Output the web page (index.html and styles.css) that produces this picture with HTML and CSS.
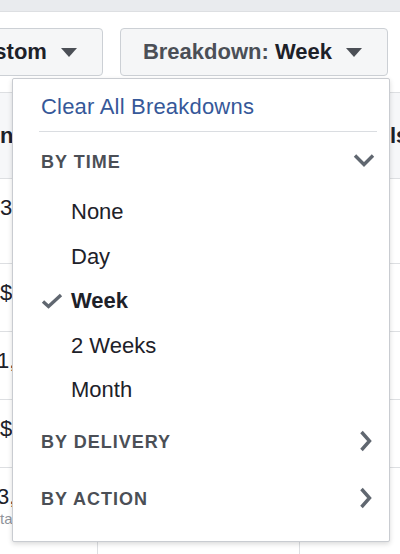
FILE: index.html
```html
<!DOCTYPE html>
<html lang="en">

<head>
    <meta charset="UTF-8">
    <meta name="viewport" content="width=device-width, initial-scale=1.0">
    <title>Breakdown</title>
    <link rel="stylesheet" href="styles.css">
</head>

<body>

    <div class="topbar"></div>

    <div class="toolbar">
        <button type="button" class="select">
            <span class="select-text">Custom</span>
            <svg class="caret" width="16" height="9" viewBox="0 0 16 9"><polygon points="0,0 16,0 8,9" /></svg>
        </button>
        <button type="button" class="select">
            <span class="select-text"><span class="select-label">Breakdown:</span> Week</span>
            <svg class="caret" width="16" height="9" viewBox="0 0 16 9"><polygon points="0,0 16,0 8,9" /></svg>
        </button>
    </div>

    <div class="table">
        <div class="row row-head">
            <div class="cell">nt</div>
            <div class="cell"></div>
            <div class="cell"></div>
            <div class="cell">ls</div>
        </div>
        <div class="row row-first">
            <div class="cell">3</div>
            <div class="cell"></div>
            <div class="cell"></div>
            <div class="cell"></div>
        </div>
        <div class="row">
            <div class="cell">$</div>
            <div class="cell"></div>
            <div class="cell"></div>
            <div class="cell"></div>
        </div>
        <div class="row">
            <div class="cell cell-shift">1,</div>
            <div class="cell"></div>
            <div class="cell"></div>
            <div class="cell"></div>
        </div>
        <div class="row">
            <div class="cell">$</div>
            <div class="cell"></div>
            <div class="cell"></div>
            <div class="cell"></div>
        </div>
        <div class="row row-total">
            <div class="cell cell-shift">3,<div class="cell-sub">ta</div></div>
            <div class="cell"></div>
            <div class="cell"></div>
            <div class="cell"></div>
        </div>
    </div>

    <div class="menu">
        <a href="#" class="menu-clear">Clear All Breakdowns</a>
        <div class="menu-sep"></div>

        <div class="menu-section">
            <span>BY TIME</span>
            <svg class="chevron-down" width="22" height="15" viewBox="0 0 22 15"><polyline points="2,2.5 11,11.5 20,2.5" /></svg>
        </div>
        <div class="menu-item"><span class="check"></span>None</div>
        <div class="menu-item"><span class="check"></span>Day</div>
        <div class="menu-item selected">
            <span class="check"><svg width="22" height="16" viewBox="0 0 22 16"><polyline points="2,8.5 7.5,13.5 20,2" /></svg></span>Week
        </div>
        <div class="menu-item"><span class="check"></span>2 Weeks</div>
        <div class="menu-item"><span class="check"></span>Month</div>

        <div class="menu-section">
            <span>BY DELIVERY</span>
            <svg class="chevron-right" width="13" height="22" viewBox="0 0 13 22"><polyline points="2.5,2 10.5,11 2.5,20" /></svg>
        </div>
        <div class="menu-section">
            <span>BY ACTION</span>
            <svg class="chevron-right" width="13" height="22" viewBox="0 0 13 22"><polyline points="2.5,2 10.5,11 2.5,20" /></svg>
        </div>
    </div>

</body>

</html>
```

FILE: styles.css
```css
body {
    font-family: "Liberation Sans", Arial, sans-serif;
    background-color: #fff;
    color: #1d2129;
    margin: 0;
    padding: 0;
    overflow: hidden;
    position: relative;
}

.topbar {
    height: 11px;
    background-color: #e9ebee;
    border-bottom: 1px solid #dddfe2;
}

/* dropdown buttons */
.toolbar {
    display: flex;
    gap: 17px;
    margin: 16px 0 0 -58px;
}

.select {
    display: flex;
    align-items: center;
    height: 48px;
    padding: 0 25px 0 22px;
    background-color: #f5f6f7;
    border: 1px solid #ccd0d5;
    border-radius: 4px;
    font-family: inherit;
    font-size: 22px;
    font-weight: bold;
    color: #1d2129;
    white-space: nowrap;
    cursor: pointer;
}

.select-label {
    color: #4b4f56;
}

.caret {
    margin-left: 14px;
    fill: #4b4f56;
}

/* table behind the menu */
.table {
    margin-top: 16px;
    width: 420px;
    border-top: 1px solid #dddfe2;
}

.row {
    display: grid;
    grid-template-columns: 98px 202px 90px 1fr;
    height: 68px;
    box-sizing: border-box;
    border-bottom: 1px solid #dddfe2;
}

.row-head {
    height: 86px;
    background-color: #f6f7f9;
    font-weight: bold;
}

.row-first {
    height: 85px;
}

.row-total {
    height: 100px;
    border-bottom: none;
}

.cell {
    font-size: 22px;
    line-height: 26px;
    padding-top: 16px;
    white-space: nowrap;
}

.row .cell:nth-child(1),
.row .cell:nth-child(2) {
    border-right: 1px solid #dddfe2;
}

.row-head .cell {
    padding-top: 0;
    display: flex;
    align-items: center;
}

.cell-shift {
    margin-left: -3px;
}

.cell-sub {
    font-size: 15px;
    line-height: 18px;
    color: #90949c;
    margin-left: 3px;
}

/* breakdown menu */
.menu {
    position: absolute;
    top: 78px;
    left: 12px;
    width: 378px;
    box-sizing: border-box;
    padding: 6px 12px 14px 28px;
    background-color: #fff;
    border: 1px solid #c9ccd1;
    border-radius: 2px;
    box-shadow: 0 2px 5px rgba(0, 0, 0, 0.15);
}

.menu-clear {
    display: block;
    height: 44px;
    line-height: 44px;
    font-size: 22px;
    letter-spacing: 0.2px;
    color: #365899;
    text-decoration: none;
}

.menu-sep {
    height: 1px;
    background-color: #dadde1;
    margin: 2px 0 1px -2px;
}

.menu-section {
    display: flex;
    align-items: center;
    justify-content: space-between;
    height: 57px;
    padding-right: 2px;
    font-size: 18px;
    font-weight: bold;
    letter-spacing: 1px;
    color: #4b4f56;
}

.menu-section span {
    margin-top: 2px;
}

.menu-section svg {
    fill: none;
    stroke: #606770;
    stroke-width: 3.4;
}

.chevron-down {
    margin-top: -2px;
}

.chevron-right {
    margin-right: 3px;
}

.menu-item {
    display: flex;
    align-items: center;
    height: 44.5px;
    font-size: 22px;
}

.menu-item.selected {
    font-weight: bold;
}

.check {
    width: 30px;
    display: flex;
}

.check svg {
    fill: none;
    stroke: #606770;
    stroke-width: 3.4;
}
```
